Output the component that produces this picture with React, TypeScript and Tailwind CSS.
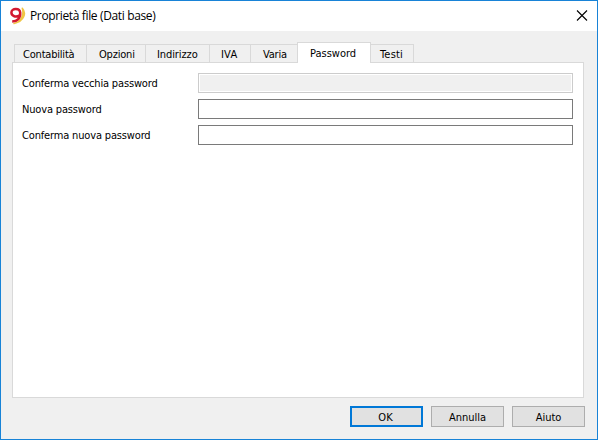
import React from 'react';

type Tab = { label: string; box: string; text: string };

const tabs: Tab[] = [
  { label: 'Contabilità', box: 'w-[73px] border-l pl-[8px]', text: 'tracking-[-0.2px]' },
  { label: 'Opzioni', box: 'w-[59px] pl-[12px]', text: 'tracking-[-0.2px]' },
  { label: 'Indirizzo', box: 'w-[64px] pl-[11px]', text: 'tracking-[-0.1px]' },
  { label: 'IVA', box: 'w-[41px] pl-[11px]', text: 'tracking-[0.2px]' },
  { label: 'Varia', box: 'w-[46px] border-r-0 pl-[12px]', text: 'tracking-[-0.2px]' },
  { label: 'Password', box: '', text: 'tracking-[0px]' },
  { label: 'Testi', box: 'w-[43px] pl-[9px]', text: 'tracking-[0.2px]' },
];

const fields = [
  { label: 'Conferma vecchia password', disabled: true, text: 'tracking-[-0.16px]' },
  { label: 'Nuova password', disabled: false, text: 'tracking-[-0.16px]' },
  { label: 'Conferma nuova password', disabled: false, text: 'tracking-[-0.16px]' },
];

function Logo() {
  return (
    <svg width="17" height="18" viewBox="0 0 17 18" fill="none">
      <path d="M13.3 1.2C17.6 6 15.5 14.2 5 16.6C11 15.2 15.6 9 13.3 1.2Z" fill="#f3cf4d" stroke="#f0c544" strokeWidth="1.5" strokeLinejoin="round" />
      <path d="M10.6 8.2C7.2 10.6 2.4 9.4 2.4 5.6C2.4 0.9 10.8 0.6 11.2 5.6C11.6 11 8.4 14.4 3.2 14.6" stroke="#d3182f" strokeWidth="2.5" />
    </svg>
  );
}

export default function App() {
  return (
    <div className="flex h-[440px] w-[598px] flex-col border border-[#1883d7] bg-[#f0f0f0] font-['DejaVu_Sans_Condensed','DejaVu_Sans',sans-serif] text-[11px] text-black [font-stretch:condensed]">
      <header className="flex h-[30px] shrink-0 items-center bg-white pl-[8px] pr-[9px]">
        <Logo />
        <h1 className="ml-[4px] whitespace-nowrap font-['Open_Sans','Noto_Sans',sans-serif] text-[12px] leading-[16px] tracking-[-0.36px] [font-stretch:normal]">
          Proprietà file (Dati base)
        </h1>
        <button aria-label="Chiudi" className="ml-auto">
          <svg width="12" height="12" viewBox="0 0 12 12" stroke="#000" strokeWidth="1.1">
            <path d="M1 0.5L11 10.5M11 0.5L1 10.5" />
          </svg>
        </button>
      </header>

      <nav className="z-10 -mb-px ml-[13px] mt-[11px] flex h-[21px] shrink-0 items-end">
        {tabs.map((t) =>
          t.label === 'Password' ? (
            <div key={t.label} className="flex h-[21px] w-[74px] border border-b-0 border-[#d9d9d9] bg-white pl-[12px] leading-[21px]">
              <span className={t.text}>{t.label}</span>
            </div>
          ) : (
            <div key={t.label} className={`mb-px flex h-[18px] border-r border-t border-[#d9d9d9] leading-[20px] ${t.box}`}>
              <span className={t.text}>{t.label}</span>
            </div>
          ),
        )}
      </nav>

      <main className="ml-[11px] flex h-[336px] w-[572px] shrink-0 flex-col gap-[6px] border border-[#d9d9d9] bg-white pl-[9px] pt-[10px]">
        {fields.map((f) => (
          <label key={f.label} className="flex h-[20px] items-center">
            <span className={`w-[176px] shrink-0 whitespace-nowrap pt-[2px] leading-[20px] ${f.text}`}>{f.label}</span>
            <input
              type="password"
              disabled={f.disabled}
              className={`h-[20px] w-[375px] border p-px outline-none ${
                f.disabled ? 'border-[#cccccc] bg-[#f0f0f0] bg-clip-content' : 'border-[#7a7a7a] bg-white'
              }`}
            />
          </label>
        ))}
      </main>

      <footer className="mt-[8px] flex justify-end gap-[8px] pr-[12px]">
        <button className="h-[21px] w-[73px] border-2 border-[#0078d7] bg-[#e1e1e1] pr-[2px] pt-px leading-[18px]">OK</button>
        <button className="h-[21px] w-[73px] border border-[#adadad] bg-[#e1e1e1] pt-px leading-[20px]">Annulla</button>
        <button className="h-[21px] w-[73px] border border-[#adadad] bg-[#e1e1e1] pt-px leading-[20px]">Aiuto</button>
      </footer>
    </div>
  );
}
